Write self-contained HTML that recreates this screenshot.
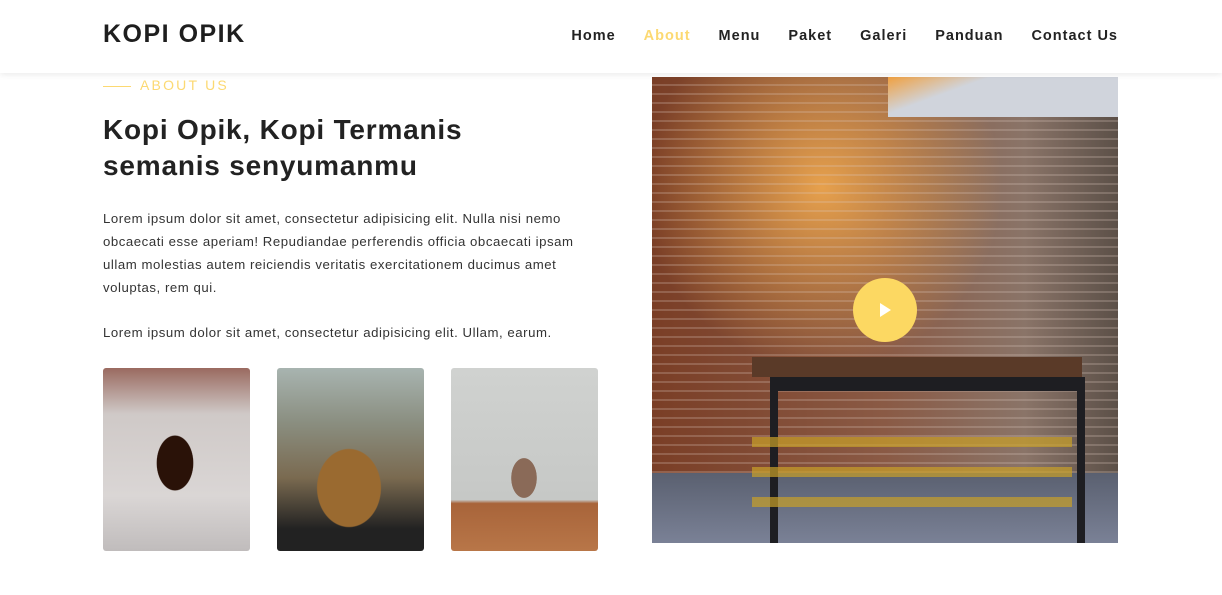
<!DOCTYPE html>
<html><head><meta charset="utf-8"><style>
*{margin:0;padding:0;box-sizing:border-box}
body{width:1222px;height:595px;overflow:hidden;background:#fff;font-family:"Liberation Sans",sans-serif;color:#222;position:relative}
.nav{position:absolute;left:0;top:0;width:1222px;height:73px;background:#fff;box-shadow:0 2px 6px rgba(0,0,0,.08);z-index:5}
.logo{position:absolute;left:103px;top:20px;font-size:25px;font-weight:bold;letter-spacing:1.5px;color:#1e1e1e}
.menu{position:absolute;right:104px;top:28px;font-size:14.5px;font-weight:bold;letter-spacing:1px;color:#222;white-space:nowrap}
.menu span{margin-left:28px}
.about{position:absolute;left:103px;top:77px;font-size:14px;letter-spacing:2.2px;color:#fcd972}
.about:before{content:"";display:inline-block;width:28px;height:1px;background:#fcd972;vertical-align:middle;margin-right:9px}
h1{position:absolute;left:103px;top:112px;font-size:28px;line-height:36px;font-weight:bold;color:#222;letter-spacing:.8px;white-space:nowrap}
p{position:absolute;left:103px;font-size:13.2px;line-height:23px;color:#333;white-space:nowrap;letter-spacing:.55px}
.thumb{position:absolute;top:368px;width:147px;height:183px;border-radius:3px}
.big{position:absolute;left:652px;top:77px;width:466px;height:466px;overflow:hidden;
background:linear-gradient(180deg,transparent 0,transparent 85%,#5a6070 85%,#7a8196 100%),
repeating-linear-gradient(180deg,transparent 0,transparent 7px,rgba(220,200,190,.25) 7px,rgba(220,200,190,.25) 9px),
radial-gradient(circle at 170px 110px,rgba(255,180,80,.8),rgba(150,80,40,0) 180px),
linear-gradient(90deg,#7a3e26,#8a5a45 50%,#8a7468 80%,#5c5048)}
.play{position:absolute;left:853px;top:278px;width:64px;height:64px;border-radius:50%;background:#fcd862}
.play:after{content:"";position:absolute;left:27px;top:25px;border-left:11px solid #fff;border-top:7px solid transparent;border-bottom:7px solid transparent}
</style></head><body>
<div class="nav"><div class="logo">KOPI OPIK</div>
<div class="menu"><span>Home</span><span style="color:#fcd972">About</span><span>Menu</span><span>Paket</span><span>Galeri</span><span>Panduan</span><span>Contact Us</span></div></div>
<div class="about">ABOUT US</div>
<h1>Kopi Opik, Kopi Termanis<br>semanis senyumanmu</h1>
<p style="top:207px">Lorem ipsum dolor sit amet, consectetur adipisicing elit. Nulla nisi nemo<br>obcaecati esse aperiam! Repudiandae perferendis officia obcaecati ipsam<br>ullam molestias autem reiciendis veritatis exercitationem ducimus amet<br>voluptas, rem qui.</p>
<p style="top:321px">Lorem ipsum dolor sit amet, consectetur adipisicing elit. Ullam, earum.</p>
<div class="thumb" style="left:103px;background:radial-gradient(ellipse 30px 45px at 72px 95px,#2a1208 60%,transparent 62%),linear-gradient(180deg,#9a6a60,#cfc9c7 25%,#dad6d5 70%,#c0bcbc)"></div>
<div class="thumb" style="left:277px;background:radial-gradient(ellipse 45px 55px at 72px 120px,#9a6a30 70%,transparent 72%),linear-gradient(180deg,#a8b4b0,#8a8e80 30%,#7a6a50 60%,#222 88%)"></div>
<div class="thumb" style="left:451px;background:radial-gradient(ellipse 18px 28px at 73px 110px,#8a6a58 70%,transparent 72%),linear-gradient(180deg,#d0d2d0,#c6c8c6 72%,#a8643a 74%,#b87648)"></div>
<div class="big">
<div style="position:absolute;left:236px;top:0;width:230px;height:40px;background:linear-gradient(160deg,#f0a040 0,#d0d4dc 30%)"></div>
<div style="position:absolute;left:100px;top:280px;width:330px;height:20px;background:#5a3a28"></div>
<div style="position:absolute;left:118px;top:300px;width:315px;height:166px;border:8px solid #1e1e22;border-bottom:none;border-top-width:14px"></div>
<div style="position:absolute;left:100px;top:340px;width:320px;height:100px;background:repeating-linear-gradient(180deg,transparent 0,transparent 20px,rgba(200,160,40,.7) 20px,rgba(200,160,40,.7) 30px)"></div>
</div>
<div class="play"></div>
</body></html>
